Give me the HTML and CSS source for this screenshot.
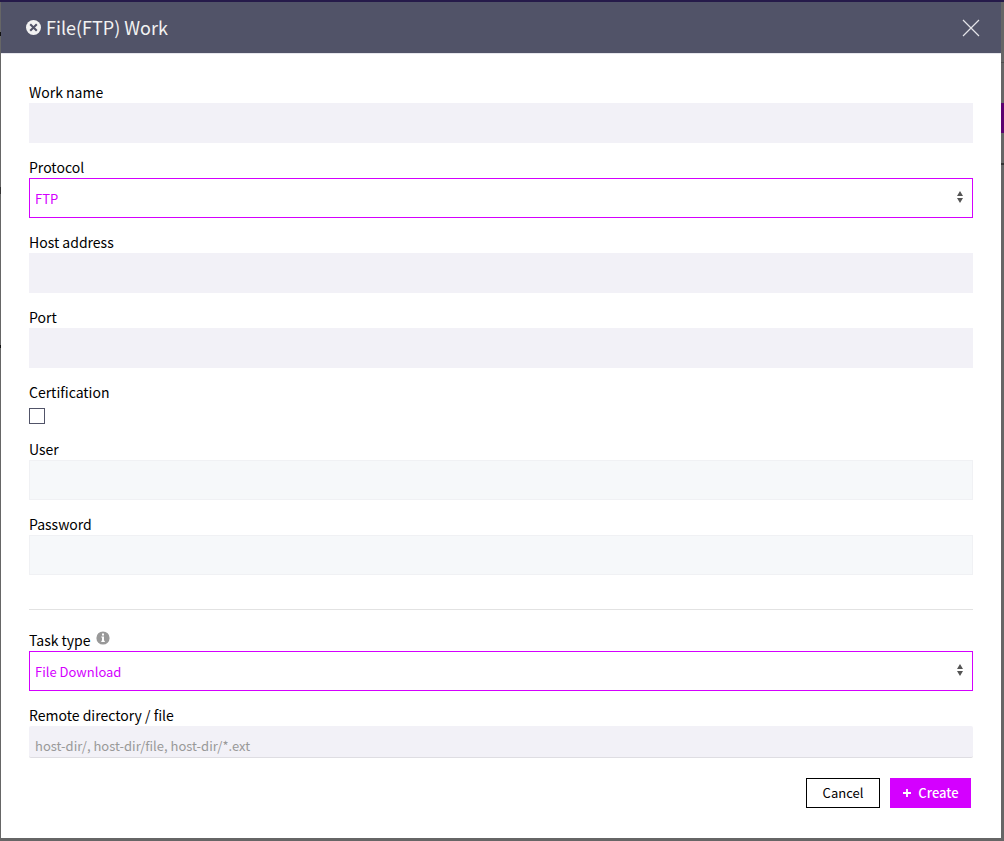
FILE: index.html
```html
<!DOCTYPE html>
<html lang="en">
<head>
<meta charset="utf-8">
<title>File(FTP) Work</title>
<link rel="stylesheet" href="styles.css">
</head>
<body>
<main class="dialog" role="dialog" aria-labelledby="dialog-title">
  <header class="dialog-header">
    <svg class="title-icon" viewBox="0 0 16 16" aria-hidden="true"><circle cx="8" cy="8" r="8" fill="#f2f2f2"/><path d="M4.5 4.5l7 7M11.5 4.5l-7 7" stroke="#515368" stroke-width="2.2"/></svg>
    <h1 class="dialog-title" id="dialog-title">File(FTP) Work</h1>
    <button class="close" type="button" aria-label="Close"><svg class="close-icon" viewBox="0 0 18 18" aria-hidden="true"><path d="M1 1l16 16M17 1L1 17" stroke="#e4e4e8" stroke-width="1.2" fill="none"/></svg></button>
  </header>
  <form class="form">
    <div class="field"><label class="label" for="name">Work name</label><input class="input" id="name" type="text"></div>
    <div class="field">
      <label class="label" for="protocol">Protocol</label>
      <div class="select-box">
        <select class="select" id="protocol"><option>FTP</option></select>
        <svg class="arrows" viewBox="0 0 6 12" aria-hidden="true"><path d="M3 0l3 5H0zM3 12l3-5H0z" fill="#555"/></svg>
      </div>
    </div>
    <div class="field"><label class="label" for="host">Host address</label><input class="input" id="host" type="text"></div>
    <div class="field"><label class="label" for="port">Port</label><input class="input" id="port" type="text"></div>
    <div class="field"><label class="label" for="cert">Certification</label><input class="check" id="cert" type="checkbox"></div>
    <div class="field"><label class="label" for="user">User</label><input class="input" id="user" type="text" disabled></div>
    <div class="field"><label class="label" for="password">Password</label><input class="input" id="password" type="password" disabled></div>
    <hr class="divider">
    <div class="field">
      <div class="label-row">
        <label class="label" for="task">Task type</label>
        <svg class="info" viewBox="0 0 14 14" aria-hidden="true"><circle cx="7" cy="7" r="6.6" fill="#999"/><path d="M6 2.6h2v1.8H6zM5.3 5.5H8v4.3h.8v1.1H5.3V9.8H6V6.6h-.7z" fill="#fff"/></svg>
      </div>
      <div class="select-box">
        <select class="select" id="task"><option>File Download</option></select>
        <svg class="arrows" viewBox="0 0 6 12" aria-hidden="true"><path d="M3 0l3 5H0zM3 12l3-5H0z" fill="#555"/></svg>
      </div>
    </div>
    <div class="field"><label class="label" for="remote">Remote directory / file</label><input class="input input-short" id="remote" type="text" placeholder="host-dir/, host-dir/file, host-dir/*.ext"></div>
    <footer class="actions">
      <button class="button" type="button">Cancel</button>
      <button class="button button-primary" type="button"><svg class="plus" viewBox="0 0 10 10" aria-hidden="true"><path d="M5 1v8M1 5h8" stroke="#fff" stroke-width="1.8"/></svg>Create</button>
    </footer>
  </form>
</main>
</body>
</html>
```
FILE: styles.css
```css
* { box-sizing: border-box; }

body {
  margin: 0;
  min-height: 100vh;
  padding: 0 3px 3px 1px;
  border-top: 2px solid #251a4a;
  background-color: #666;
  background-image:
    linear-gradient(#5c0070, #5c0070),
    linear-gradient(#333, #333),
    linear-gradient(#505050, #505050),
    linear-gradient(#111, #111),
    linear-gradient(#111, #111),
    linear-gradient(#333, #333);
  background-repeat: no-repeat;
  background-size: 3px 30px, 3px 2px, 3px 1px, 1px 4px, 1px 3px, 1px 7px;
  background-position: right 103px, right 163px, right 62px, 0 32px, 0 345px, 0 187px;
  font-family: "Noto Sans CJK KR", "Noto Sans", sans-serif;
  font-size: 14px;
  line-height: 20px;
  color: #000;
}

.dialog { background: #fff; }

.dialog-header {
  display: flex;
  align-items: center;
  height: 52px;
  padding: 0 21px 0 25px;
  border-bottom: 1px solid #e6e6ec;
  background: #515368;
}

.title-icon { width: 15px; height: 15px; margin-right: 5px; }

.dialog-title {
  flex: 1;
  margin: 0;
  padding-bottom: 2px;
  font-size: 18px;
  font-weight: 400;
  line-height: 28px;
  color: #f2f2f2;
}

.close {
  display: flex;
  padding: 0;
  border: 0;
  background: none;
}

.close-icon { width: 18px; height: 18px; }

.form {
  display: flex;
  flex-direction: column;
  gap: 15px;
  padding: 29px 28px 30px;
}

.field { display: flex; flex-direction: column; }

.label { padding-bottom: 2px; line-height: 18px; }

.label-row { display: flex; gap: 5px; }

.info { width: 14px; height: 14px; }

.input {
  width: 100%;
  height: 40px;
  padding: 0 6px;
  border: 0;
  border-radius: 0;
  background: #f2f1f7;
  font: inherit;
  font-size: 13px;
}

.input:disabled {
  border: 1px solid #f0f1f4;
  background: #f6f8fa;
}

.input-short {
  height: 32px;
  padding-top: 8px;
  border-bottom: 1px solid #dedde2;
  border-radius: 2px;
}

.input::placeholder { color: #999; opacity: 1; }

.select-box { display: grid; align-items: center; }

.select {
  grid-area: 1 / 1;
  width: 100%;
  height: 40px;
  padding: 2px 5px 0;
  border: 1px solid #d400ff;
  border-radius: 0;
  appearance: none;
  background: #fff;
  font: inherit;
  font-size: 13px;
  color: #d400ff;
}

.arrows {
  grid-area: 1 / 1;
  justify-self: end;
  width: 6px;
  height: 12px;
  margin: 0 10px 2px 0;
  pointer-events: none;
}

.check {
  width: 16px;
  height: 16px;
  margin: 5px 0 1px;
  border: 1px solid #515368;
  appearance: none;
  background: #fff;
}

.divider {
  width: 100%;
  margin: 19px 0 6px;
  border: 0;
  border-top: 1px solid #e2e2e2;
}

.actions {
  display: flex;
  justify-content: flex-end;
  gap: 10px;
  padding: 5px 2px 0 0;
}

.button {
  display: flex;
  align-items: center;
  justify-content: center;
  height: 30px;
  min-width: 74px;
  padding: 0 14px;
  border: 1px solid #000;
  background: #fff;
  font: inherit;
  font-size: 13px;
  color: #000;
}

.button-primary {
  min-width: 81px;
  padding: 0 10px;
  border-color: #d400ff;
  background: #d400ff;
  font-weight: 500;
  color: #fff;
}

.plus { width: 10px; height: 10px; margin-right: 6px; }
```
